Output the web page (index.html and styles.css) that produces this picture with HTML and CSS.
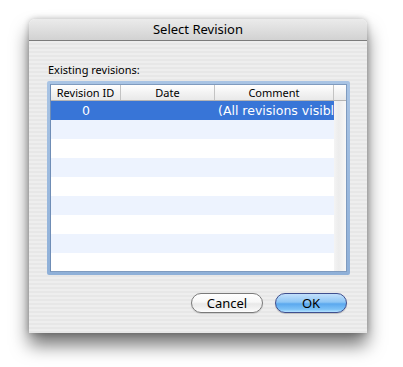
FILE: index.html
```html
<!DOCTYPE html>
<html>
<head>
<meta charset="utf-8">
<link rel="stylesheet" href="styles.css">
</head>
<body>
<div class="stage">
  <div class="window">
    <div class="titlebar">Select Revision</div>
    <div class="content">
      <div class="label">Existing revisions:</div>
      <div class="frame">
        <div class="table">
          <div class="header">
            <div class="hcell c-id">Revision ID</div>
            <div class="hcell c-date">Date</div>
            <div class="hcell c-comment">Comment</div>
            <div class="hcell c-corner"></div>
          </div>
          <div class="body">
            <div class="rows">
              <div class="row selected">
                <div class="cell c-id center">0</div>
                <div class="cell c-date"></div>
                <div class="cell c-comment">(All revisions visible)</div>
              </div>
              <div class="row alt"></div>
              <div class="row"></div>
              <div class="row alt"></div>
              <div class="row"></div>
              <div class="row alt"></div>
              <div class="row"></div>
              <div class="row alt"></div>
              <div class="row"></div>
            </div>
            <div class="scroll"></div>
          </div>
        </div>
      </div>
      <div class="buttons">
        <div class="btn cancel">Cancel</div>
        <div class="btn ok">OK</div>
      </div>
    </div>
  </div>
</div>
</body>
</html>
```
FILE: styles.css
```css
html, body {
  margin: 0;
  padding: 0;
  background: #fff;
}
body {
  width: 403px;
  height: 367px;
  overflow: hidden;
  font-family: "Lucida Grande", "Noto Sans", "DejaVu Sans", sans-serif;
  color: #000;
}
.stage {
  padding: 19px 36px 0 29px;
}
.window {
  width: 338px;
  height: 314px;
  display: flex;
  flex-direction: column;
  border-radius: 6px 6px 0 0;
  box-shadow: 0 12px 18px rgba(0, 0, 0, 0.55), 0 0 6px rgba(0, 0, 0, 0.25);
  overflow: hidden;
}
.titlebar {
  height: 21px;
  border-bottom: 1px solid #7c7c7c;
  background: linear-gradient(#ebebeb, #d2d2d2);
  font-size: 13px;
  line-height: 21px;
  text-align: center;
}
.content {
  flex: 1;
  display: flex;
  flex-direction: column;
  padding: 22px 17px 20px 18px;
  background: repeating-linear-gradient(to bottom, #eeeeee 0, #eeeeee 2px, #e7e7e7 2px, #e7e7e7 4px);
}
.label {
  font-size: 11px;
  line-height: 14px;
  height: 14px;
  margin-left: 1px;
  margin-bottom: 4px;
}
.frame {
  height: 194px;
  padding: 3px;
  box-sizing: border-box;
  border-radius: 2px;
  background: linear-gradient(#a9c4e4, #8fb0d8);
}
.table {
  height: 100%;
  box-sizing: border-box;
  border: 1px solid #7f9bbf;
  border-left-color: #6f8db6;
  background: #fff;
  display: flex;
  flex-direction: column;
  overflow: hidden;
}
.header {
  display: flex;
  height: 15px;
  border-bottom: 1px solid #b4b4b4;
  background: linear-gradient(#ffffff, #f3f3f3 50%, #e9e9e9);
  font-size: 11px;
  line-height: 15px;
}
.hcell {
  text-align: center;
  border-right: 1px solid #c3c3c3;
  box-sizing: border-box;
}
.c-id { width: 70px; }
.c-date { width: 94px; }
.c-comment { width: 119px; }
.c-corner { width: 12px; border-right: none; }
.body {
  flex: 1;
  display: flex;
  overflow: hidden;
}
.rows {
  width: 283px;
}
.row {
  height: 19px;
  display: flex;
  font-family: "DejaVu Sans", "Noto Sans", sans-serif;
  font-size: 12.5px;
  line-height: 19px;
}
.row.alt {
  background: #edf3fe;
}
.row.selected {
  background: #3875d7;
  color: #fff;
}
.cell {
  box-sizing: border-box;
  white-space: nowrap;
  overflow: hidden;
}
.cell.center {
  text-align: center;
}
.row .c-comment {
  padding-left: 3px;
}
.scroll {
  width: 12px;
  background: linear-gradient(to right, #f4f4f4, #ececec 40%, #f8f8f8);
}
.buttons {
  display: flex;
  justify-content: flex-end;
  gap: 12px;
  margin-top: 18px;
  margin-right: 3px;
}
.btn {
  width: 72px;
  height: 20px;
  box-sizing: border-box;
  border-radius: 10px;
  font-size: 13px;
  line-height: 18px;
  text-align: center;
}
.cancel {
  border: 1px solid #7a7a7a;
  background: linear-gradient(#ffffff 0%, #f7f7f7 45%, #e8e8e8 55%, #f4f4f4 85%, #ffffff 100%);
  box-shadow: 0 1px 1px rgba(0, 0, 0, 0.15);
}
.ok {
  border: 1px solid #3f4f8e;
  background: linear-gradient(#c3e0fb 0%, #8ec6f5 45%, #5ba8ee 55%, #7dc2f7 85%, #b6e3ff 100%);
  box-shadow: 0 1px 1px rgba(0, 0, 0, 0.2);
}
```
